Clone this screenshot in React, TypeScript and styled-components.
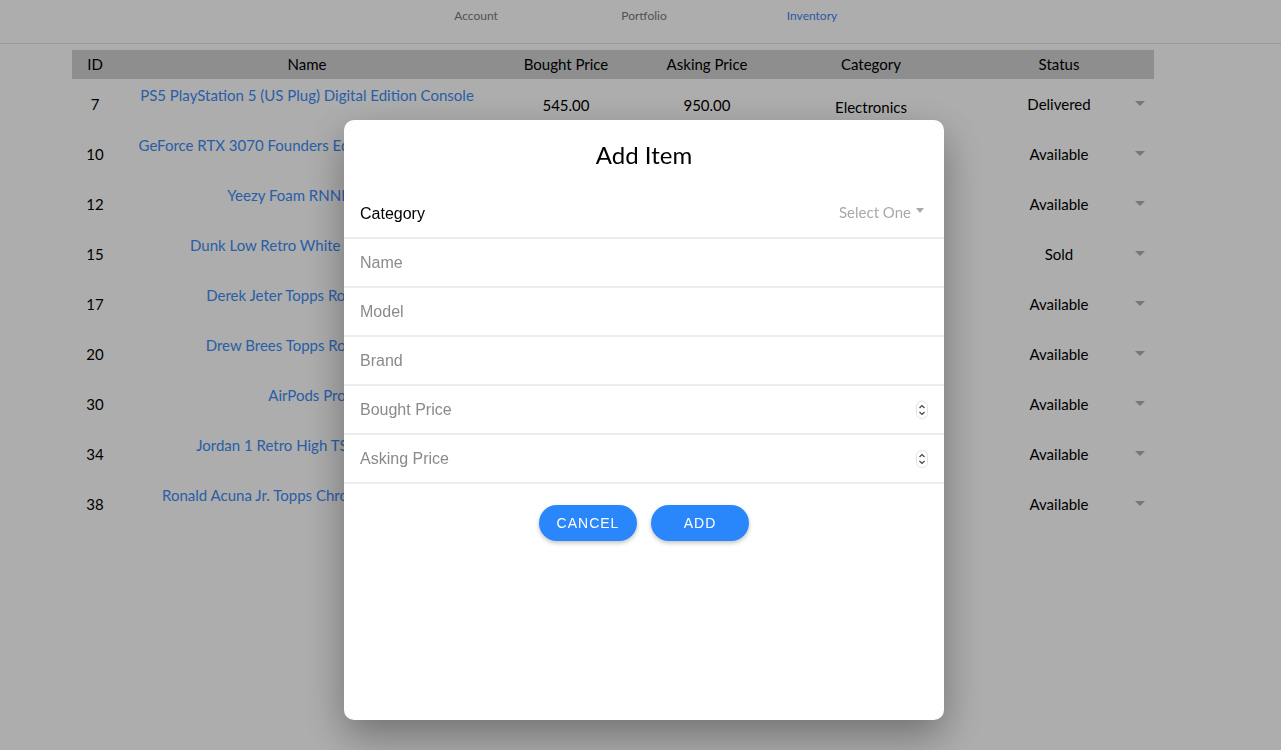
import React from 'react'
import styled, { createGlobalStyle } from 'styled-components'

const GlobalStyle = createGlobalStyle`
  html, body {
    margin: 0;
    padding: 0;
    background: #ffffff;
    font-family: "Lato", "Open Sans", sans-serif;
  }
`

const items = [
  { id: 7, name: 'PS5 PlayStation 5 (US Plug) Digital Edition Console', bought: '545.00', asking: '950.00', category: 'Electronics', status: 'Delivered' },
  { id: 10, name: 'GeForce RTX 3070 Founders Edition Graphics Card', bought: '499.00', asking: '899.00', category: 'Electronics', status: 'Available' },
  { id: 12, name: 'Yeezy Foam RNNR Sand', bought: '80.00', asking: '220.00', category: 'Shoes', status: 'Available' },
  { id: 15, name: 'Dunk Low Retro White Black Panda', bought: '100.00', asking: '260.00', category: 'Shoes', status: 'Sold' },
  { id: 17, name: 'Derek Jeter Topps Rookie Card', bought: '150.00', asking: '400.00', category: 'Cards', status: 'Available' },
  { id: 20, name: 'Drew Brees Topps Rookie Card', bought: '60.00', asking: '180.00', category: 'Cards', status: 'Available' },
  { id: 30, name: 'AirPods Pro', bought: '189.00', asking: '249.00', category: 'Electronics', status: 'Available' },
  { id: 34, name: 'Jordan 1 Retro High TS Mocha 10', bought: '175.00', asking: '900.00', category: 'Shoes', status: 'Available' },
  { id: 38, name: 'Ronald Acuna Jr. Topps Chrome Rookie Card', bought: '90.00', asking: '300.00', category: 'Cards', status: 'Available' },
]

const COLS = '46px 378px 140px 142px 186px 190px'

const Page = styled.div`
  min-height: 750px;
  background: #ffffff;
`

const Nav = styled.nav`
  height: 44px;
  box-sizing: border-box;
  display: flex;
  justify-content: center;
  padding: 8px 0 0 7px;
  border-bottom: 1px solid #e0e0e0;
`

const NavItem = styled.a<{ $active?: boolean }>`
  width: 168px;
  text-align: center;
  font-size: 12px;
  line-height: 15px;
  color: ${(p) => (p.$active ? '#3b86f0' : '#7a7a7a')};
  text-decoration: none;
`

const Table = styled.div`
  width: 1082px;
  margin: 6px 0 0 72px;
`

const HeadRow = styled.div`
  display: grid;
  grid-template-columns: ${COLS};
  height: 29px;
  align-items: center;
  background: #d1d1d1;
`

const HeadCell = styled.div`
  text-align: center;
  font-size: 15px;
  line-height: 18px;
  padding-bottom: 2px;
  color: #000;
`

const Row = styled.div`
  display: grid;
  grid-template-columns: ${COLS};
  height: 50px;
`

const Cell = styled.div<{ $top: number }>`
  text-align: center;
  font-size: 15px;
  line-height: 18px;
  color: #000;
  padding-top: ${(p) => p.$top}px;
  white-space: nowrap;
  overflow: hidden;
`

const NameLink = styled.a`
  color: #3c8cf5;
  text-decoration: none;
`

const StatusCell = styled.div`
  display: grid;
  grid-template-columns: 1fr auto 1fr;
  align-items: start;
  padding-top: 16px;
  font-size: 15px;
  line-height: 18px;
  color: #000;
`

const Caret = styled.span<{ $color: string }>`
  justify-self: end;
  margin: 6px 9px 0 0;
  width: 0;
  height: 0;
  border-left: 5px solid transparent;
  border-right: 5px solid transparent;
  border-top: 5px solid ${(p) => p.$color};
`

const SmallCaret = styled.span`
  width: 0;
  height: 0;
  border-left: 4px solid transparent;
  border-right: 4px solid transparent;
  border-top: 5px solid #a9a9a9;
  margin-top: -3px;
`

const Overlay = styled.div`
  position: fixed;
  inset: 0;
  background: rgba(0, 0, 0, 0.32);
  display: flex;
  align-items: flex-start;
  padding: 120px 0 0 344px;
`

const Modal = styled.div`
  width: 600px;
  height: 600px;
  background: #fff;
  border-radius: 10px;
  box-shadow: 0 16px 40px rgba(0, 0, 0, 0.35);
  display: flex;
  flex-direction: column;
`

const Title = styled.h2`
  margin: 0;
  padding: 20px 0 0;
  height: 70px;
  box-sizing: border-box;
  text-align: center;
  font-size: 24px;
  font-weight: 400;
  line-height: 30px;
  color: #000;
`

const Field = styled.div`
  display: flex;
  align-items: center;
  justify-content: space-between;
  height: 47px;
  padding: 0 16px;
  border-bottom: 2px solid #ececec;
  font-family: "Liberation Sans", Arial, sans-serif;
  font-size: 16px;
`

const Label = styled.span<{ $dark?: boolean }>`
  color: ${(p) => (p.$dark ? '#000' : '#8a8a8a')};
`

const SelectOne = styled.span`
  display: flex;
  align-items: center;
  gap: 5px;
  margin: -3px 4px 0 0;
  font-family: "Lato", "Open Sans", sans-serif;
  font-size: 15px;
  color: #a9a9a9;
`

const Actions = styled.div`
  display: flex;
  justify-content: center;
  gap: 14px;
  margin-top: 21px;
`

const Button = styled.button`
  width: 98px;
  height: 36px;
  border: none;
  border-radius: 18px;
  background: #2a86fb;
  color: #fff;
  font-family: "Liberation Sans", Arial, sans-serif;
  font-size: 14px;
  letter-spacing: 1px;
  text-transform: uppercase;
  box-shadow: 0 2px 4px rgba(0, 0, 0, 0.25);
`

const Spinner = () => (
  <svg width="12" height="18" viewBox="0 0 12 18">
    <rect x="0.5" y="0.5" width="11" height="17" rx="5" fill="#fff" stroke="#e2e2e2" />
    <path d="M3.5 7 L6 4.5 L8.5 7" fill="none" stroke="#444" strokeWidth="1.2" />
    <path d="M3.5 11 L6 13.5 L8.5 11" fill="none" stroke="#444" strokeWidth="1.2" />
  </svg>
)

export default function App() {
  return (
    <>
      <GlobalStyle />
      <Page>
        <Nav>
          <NavItem>Account</NavItem>
          <NavItem>Portfolio</NavItem>
          <NavItem $active>Inventory</NavItem>
        </Nav>
        <Table>
          <HeadRow>
            <HeadCell>ID</HeadCell>
            <HeadCell>Name</HeadCell>
            <HeadCell>Bought Price</HeadCell>
            <HeadCell>Asking Price</HeadCell>
            <HeadCell>Category</HeadCell>
            <HeadCell>Status</HeadCell>
          </HeadRow>
          {items.map((it) => (
            <Row key={it.id}>
              <Cell $top={16}>{it.id}</Cell>
              <Cell $top={7}>
                <NameLink>{it.name}</NameLink>
              </Cell>
              <Cell $top={17}>{it.bought}</Cell>
              <Cell $top={17}>{it.asking}</Cell>
              <Cell $top={19}>{it.category}</Cell>
              <StatusCell>
                <span />
                <span>{it.status}</span>
                <Caret $color="#b0b0b0" />
              </StatusCell>
            </Row>
          ))}
        </Table>
        <Overlay>
          <Modal>
            <Title>Add Item</Title>
            <Field>
              <Label $dark>Category</Label>
              <SelectOne>
                Select One <SmallCaret />
              </SelectOne>
            </Field>
            <Field><Label>Name</Label></Field>
            <Field><Label>Model</Label></Field>
            <Field><Label>Brand</Label></Field>
            <Field><Label>Bought Price</Label><Spinner /></Field>
            <Field><Label>Asking Price</Label><Spinner /></Field>
            <Actions>
              <Button>Cancel</Button>
              <Button>Add</Button>
            </Actions>
          </Modal>
        </Overlay>
      </Page>
    </>
  )
}
